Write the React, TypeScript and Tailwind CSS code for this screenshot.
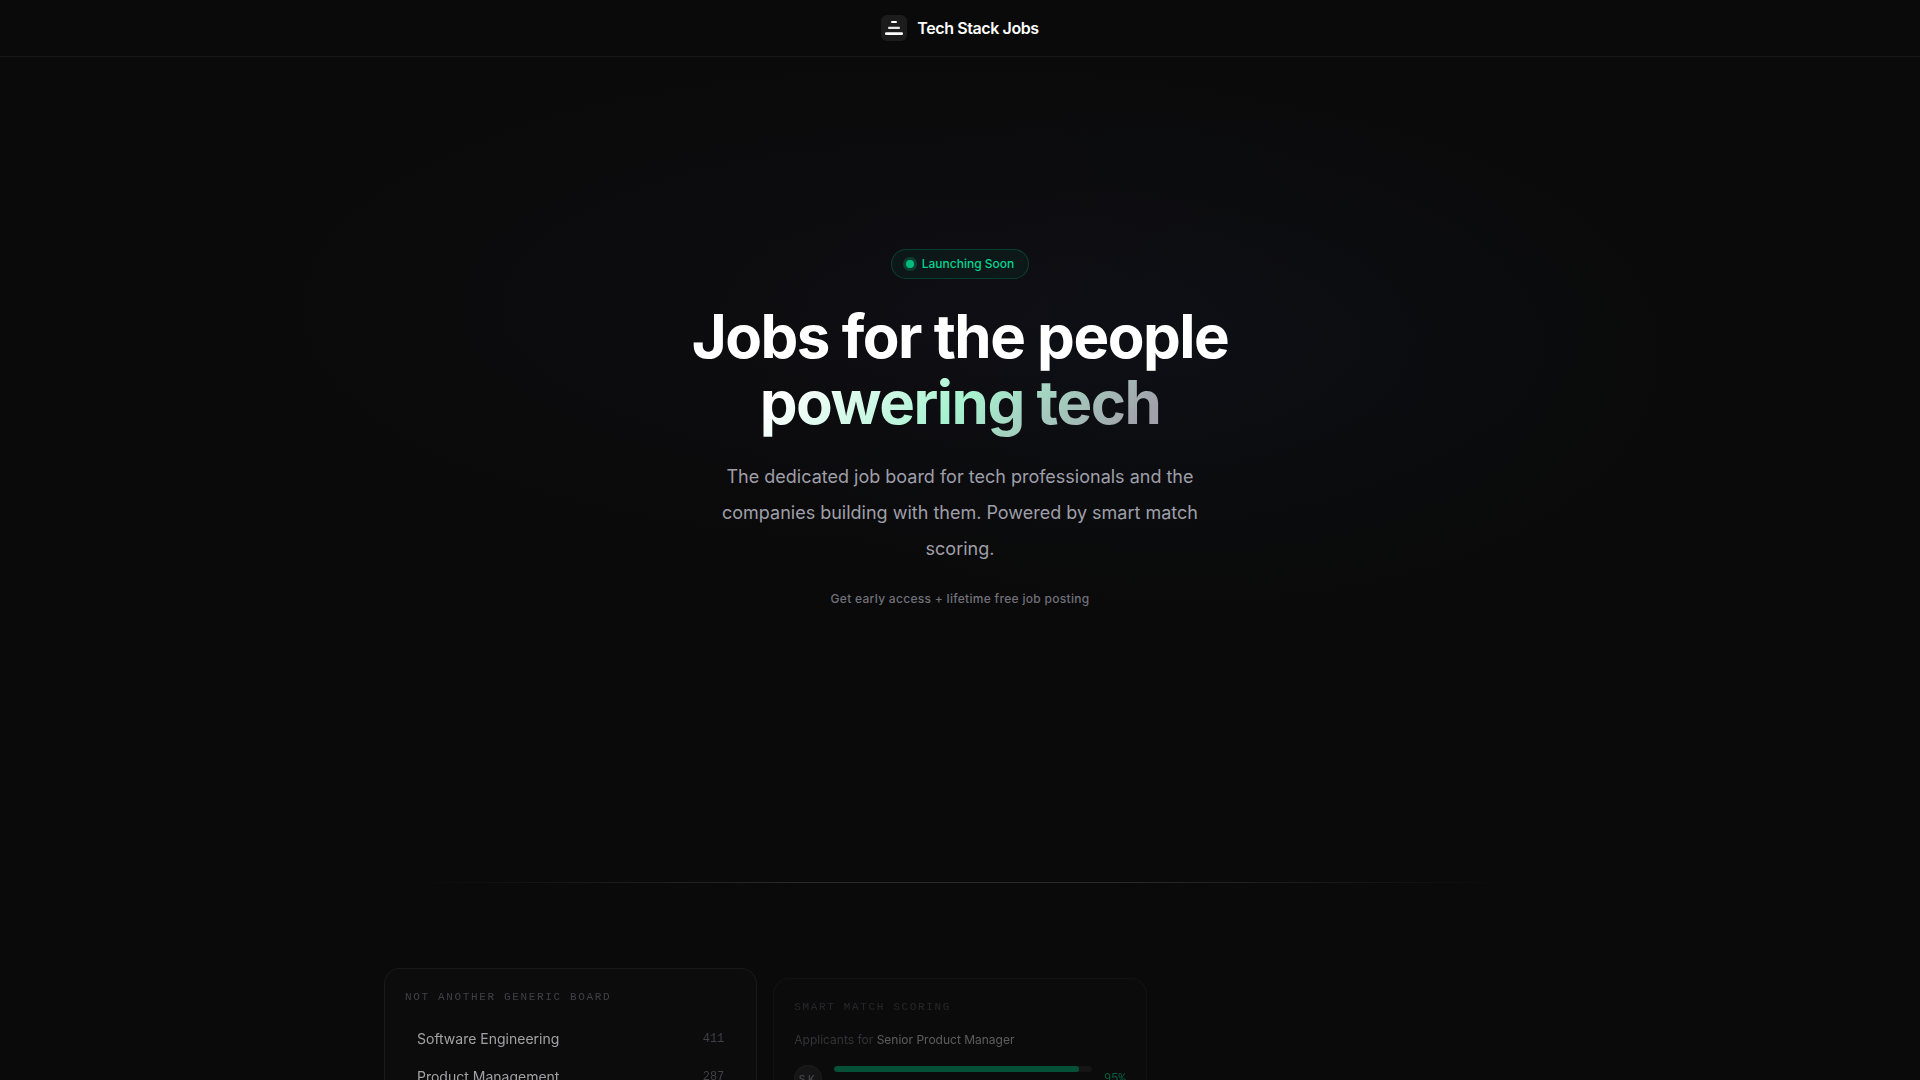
const categories = [
  { name: "Software Engineering", count: 411 },
  { name: "Product Management", count: 287 },
];

const applicants = [
  { initials: "S.K.", skills: "Product Strategy, Agile, SQL", score: 95 },
];

function Logo() {
  return (
    <svg width="26" height="26" viewBox="0 0 26 26" aria-hidden="true">
      <rect width="26" height="26" rx="6" fill="#1c1c1c" />
      <rect x="10" y="6" width="6" height="2" rx="1" fill="#fff" />
      <rect x="7" y="11.8" width="12" height="2.2" rx="1" fill="#e5e5e5" />
      <rect x="4" y="17.3" width="18" height="2.7" rx="1.3" fill="#fff" />
    </svg>
  );
}

function Header() {
  return (
    <header className="flex h-[57px] items-center justify-center border-b border-white/6">
      <a href="#" className="flex items-center gap-2.5">
        <Logo />
        <span className="text-base font-semibold tracking-tight text-white">
          Tech Stack Jobs
        </span>
      </a>
    </header>
  );
}

function Hero() {
  return (
    <section className="flex min-h-[825px] flex-col items-center bg-[radial-gradient(ellipse_36%_31%_at_49%_30%,rgba(120,80,200,0.035),transparent),radial-gradient(ellipse_26%_32%_at_62%_36%,rgba(50,110,200,0.035),transparent)] px-6 pt-48 text-center">
      <div className="flex items-center gap-2 rounded-full border border-[#00bc7d]/25 bg-[#00bc7d]/6 px-3.5 py-1.5 text-xs font-medium text-[#00d492]">
        <span className="size-2 rounded-full bg-[#00bc7d] ring-3 ring-[#00bc7d]/25" />
        Launching Soon
      </div>
      <h1 className="mt-6 text-[60px] leading-[66px] font-bold tracking-tight text-white">
        Jobs for the people
        <br />
        <span className="bg-[linear-gradient(135deg,#ffffff_10%,#a7f3d0_50%,#a1a1aa_92%)] bg-clip-text text-transparent">
          powering tech
        </span>
      </h1>
      <p className="mt-6 max-w-[480px] text-lg leading-9 text-[#9f9fa9]">
        The dedicated job board for tech professionals and the companies
        building with them. Powered by smart match scoring.
      </p>
      <p className="mt-6 text-xs font-medium tracking-wide text-[#71717b]">
        Get early access + lifetime free job posting
      </p>
    </section>
  );
}

function CardTitle({ children }: { children: string }) {
  return (
    <h2 className="font-['Liberation_Mono',monospace] text-[11px] leading-4 tracking-[0.15em] text-[#52525c] uppercase">
      {children}
    </h2>
  );
}

function CategoriesCard() {
  return (
    <article className="mt-px rounded-2xl border border-white/8 bg-white/1 p-5 opacity-75">
      <CardTitle>Not another generic board</CardTitle>
      <ul className="mt-[15px]">
        {categories.map((category) => (
          <li
            key={category.name}
            className="flex items-center justify-between px-3 py-2 text-sm leading-[22px] text-[#d4d4d8]"
          >
            {category.name}
            <span className="font-['Liberation_Mono',monospace] text-xs text-[#52525c]">
              {category.count}
            </span>
          </li>
        ))}
      </ul>
    </article>
  );
}

function MatchCard() {
  return (
    <article className="mt-[11px] rounded-2xl border border-white/8 bg-white/1 p-5 opacity-40">
      <CardTitle>Smart match scoring</CardTitle>
      <p className="mt-[15px] text-xs leading-5 text-[#71717b]">
        Applicants for{" "}
        <span className="text-[#d4d4d8]">Senior Product Manager</span>
      </p>
      <ul className="mt-[15px]">
        {applicants.map((applicant) => (
          <li key={applicant.initials} className="flex items-center gap-3">
            <span className="flex size-7 shrink-0 items-center justify-center rounded-full border border-white/8 bg-[#27272a] text-[10px] font-medium text-[#9f9fa9]">
              {applicant.initials}
            </span>
            <div className="min-w-0 flex-1">
              <div className="h-1.5 overflow-hidden rounded-full bg-[#27272a]">
                <div
                  className="h-full rounded-full bg-[#00bc7d]"
                  style={{ width: `${applicant.score}%` }}
                />
              </div>
              <p className="mt-1 text-[10px] leading-4 text-[#52525c]">
                {applicant.skills}
              </p>
            </div>
            <span className="font-['Liberation_Mono',monospace] text-xs text-[#00d492]">
              {applicant.score}%
            </span>
          </li>
        ))}
      </ul>
    </article>
  );
}

export default function App() {
  return (
    <div className="min-h-screen bg-[#0a0a0a] font-['Inter',sans-serif]">
      <Header />
      <main>
        <Hero />
        <div className="mx-auto h-px max-w-[1100px] bg-[linear-gradient(90deg,transparent,rgba(255,255,255,0.13)_35%,rgba(255,255,255,0.13)_65%,transparent)]" />
        <section className="mx-auto grid max-w-6xl grid-cols-3 items-start gap-4 pt-21">
          <CategoriesCard />
          <MatchCard />
        </section>
      </main>
    </div>
  );
}
